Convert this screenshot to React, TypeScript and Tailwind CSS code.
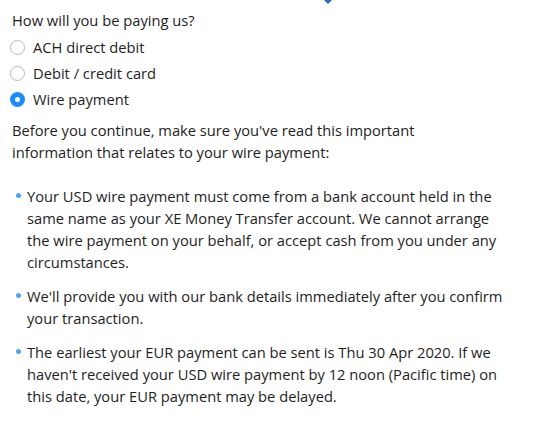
import React from "react";

function Radio({ checked, label }: { checked?: boolean; label: string }) {
  return (
    <div className="flex items-center h-[26px]">
      {checked ? (
        <span className="ml-[10px] w-[15px] h-[15px] rounded-full bg-[#1a8cff] flex items-center justify-center">
          <span className="w-[5px] h-[5px] rounded-full bg-white" />
        </span>
      ) : (
        <span className="ml-[10px] w-[15px] h-[15px] rounded-full border border-[#b8b8b8] bg-white" />
      )}
      <span className="ml-[8px]">{label}</span>
    </div>
  );
}

function Bullet({ children }: { children: React.ReactNode }) {
  return (
    <li className="relative pl-[27px]">
      <span className="absolute left-[16px] top-[8px] w-[5px] h-[5px] rounded-full bg-[#4da6f0]" />
      {children}
    </li>
  );
}

export default function App() {
  return (
    <div
      className="relative w-[536px] h-[425px] bg-white text-[14.7px] leading-[22px] text-[#1e1e1e] overflow-hidden"
      style={{ fontFamily: '"Open Sans", "Noto Sans", sans-serif' }}
    >
      <svg className="absolute left-[322px] top-0" width="12" height="5" viewBox="0 0 12 5">
        <polygon points="2,0 10,0 6,4" fill="#1f6fc4" />
      </svg>
      <div className="pt-[9px] pl-[12px]">How will you be paying us?</div>
      <div className="mt-[3px]">
        <Radio label="ACH direct debit" />
        <Radio label="Debit / credit card" />
        <Radio checked label="Wire payment" />
      </div>
      <p className="mt-[7px] pl-[12px] pr-[100px]">
        Before you continue, make sure you've read this important information that relates to your wire payment:
      </p>
      <ul className="mt-[22px] pr-[24px] flex flex-col gap-[12px]">
        <Bullet>
          Your USD wire payment must come from a bank account held in the same name as your XE Money Transfer account. We cannot arrange the wire payment on your behalf, or accept cash from you under any circumstances.
        </Bullet>
        <Bullet>
          We'll provide you with our bank details immediately after you confirm your transaction.
        </Bullet>
        <Bullet>
          The earliest your EUR payment can be sent is Thu 30 Apr 2020. If we haven't received your USD wire payment by 12 noon (Pacific time) on this date, your EUR payment may be delayed.
        </Bullet>
      </ul>
    </div>
  );
}
